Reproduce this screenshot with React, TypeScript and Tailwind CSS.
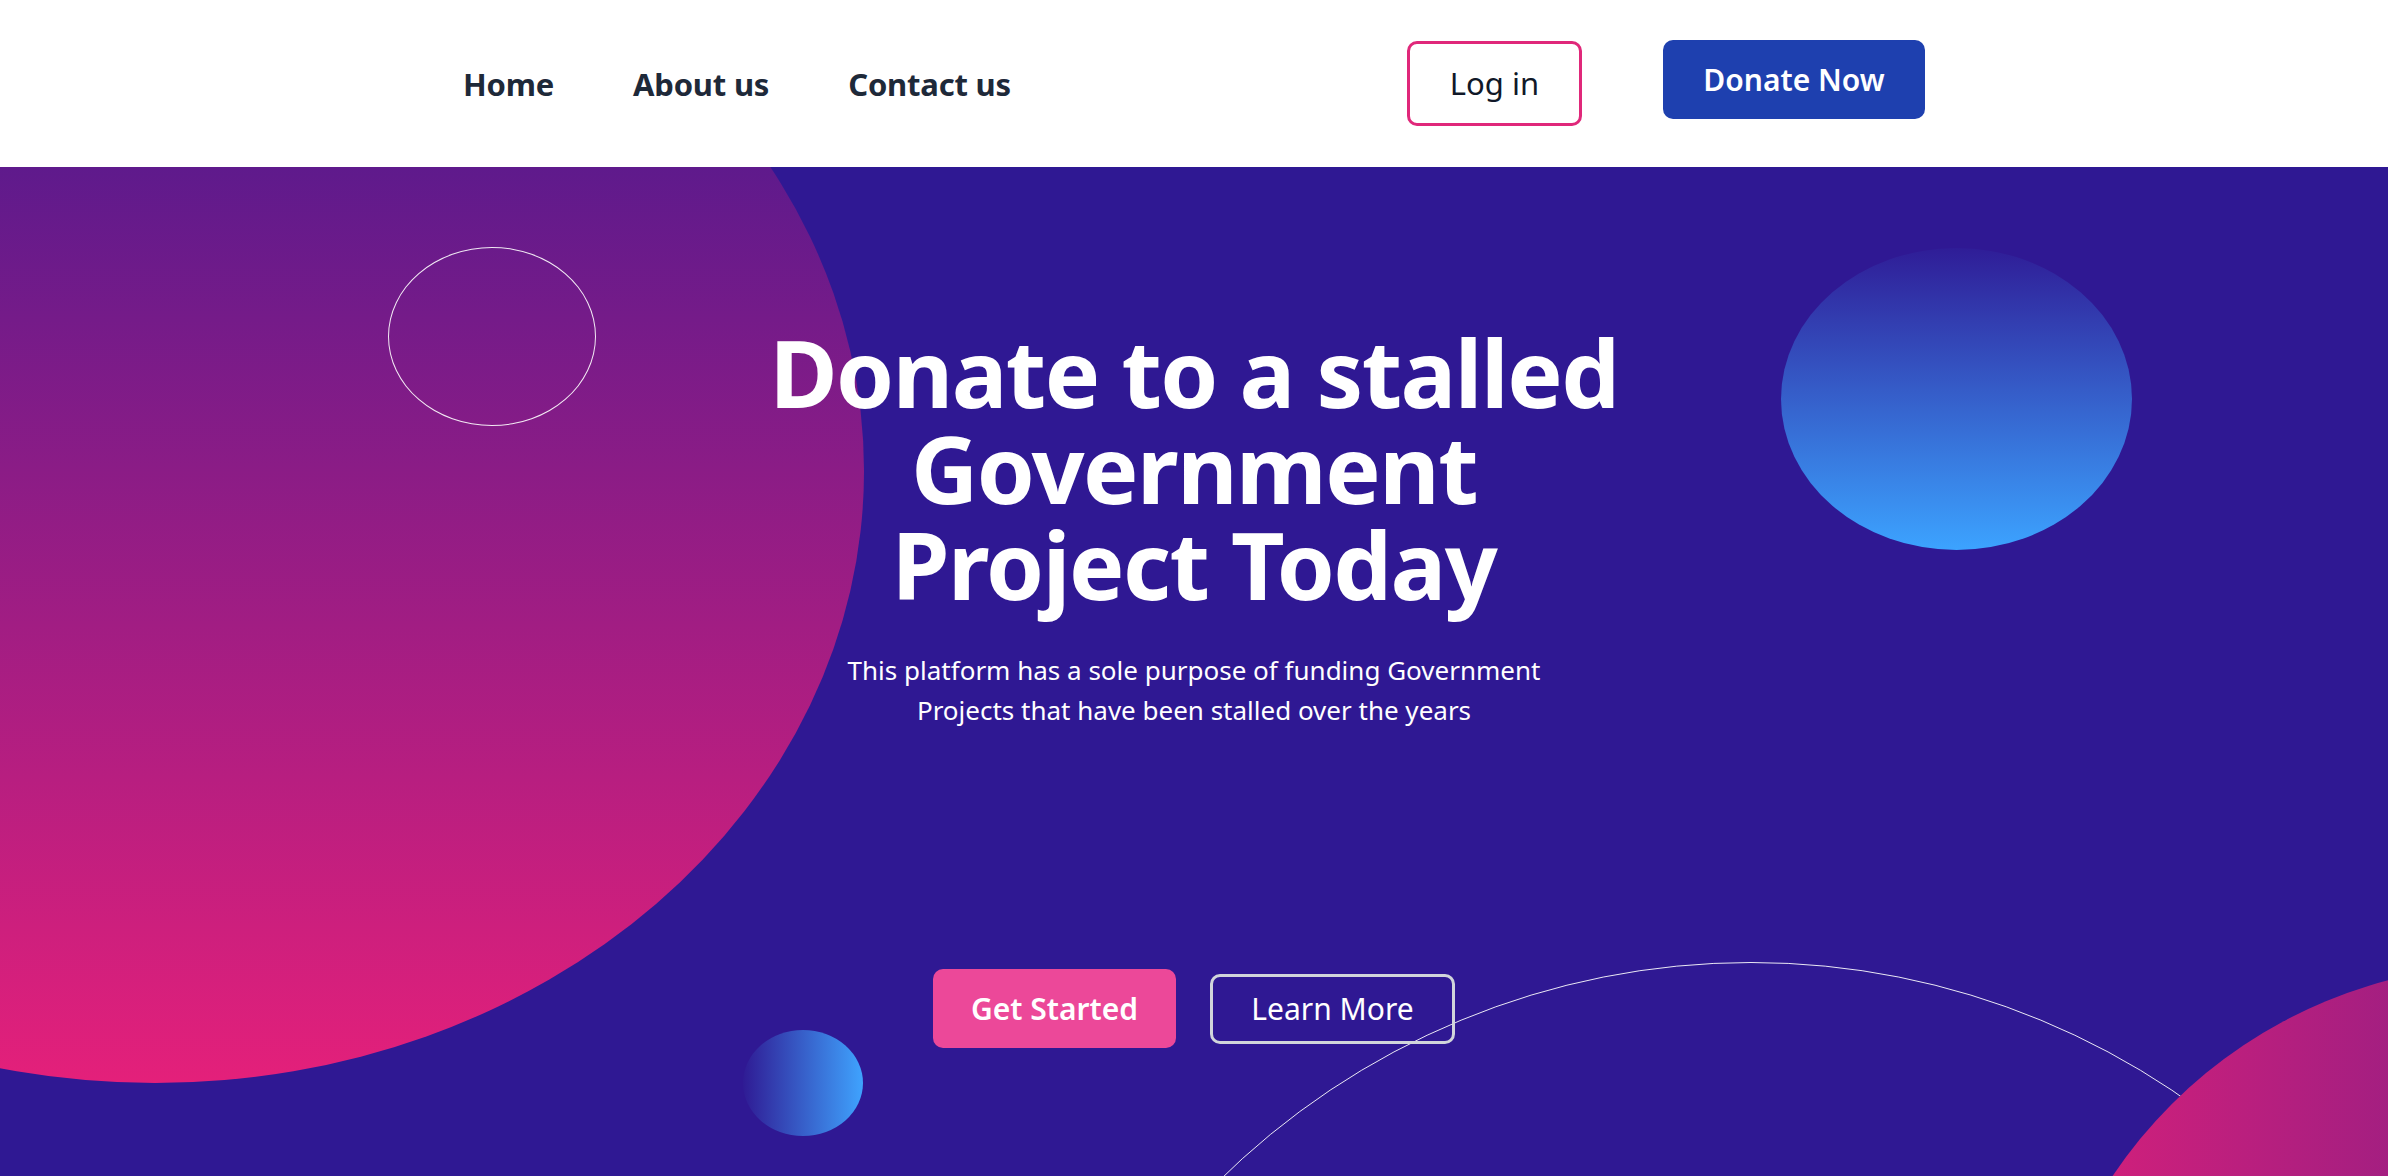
import React from "react";

export default function App() {
  return (
    <div className="w-[2388px] h-[1176px] overflow-hidden bg-white font-['Noto_Sans',sans-serif]">
      {/* Navbar */}
      <header className="h-[167px] bg-white">
        <div className="mx-auto w-[1462px] h-full flex justify-between items-start">
          <nav className="flex items-center gap-[79px] h-[167px] pt-[2px]">
            <a className="text-[31px] font-bold text-gray-800 tracking-[-0.2px]">Home</a>
            <a className="text-[31px] font-bold text-gray-800 tracking-[-0.2px]">About us</a>
            <a className="text-[31px] font-bold text-gray-800 tracking-[-0.2px]">Contact us</a>
          </nav>
          <div className="flex items-start gap-[81px] pt-[40px]">
            <button className="mt-[1px] w-[175px] h-[85px] border-[3px] border-[#e0287a] rounded-[10px] text-[31px] text-gray-900 bg-white flex items-center justify-center">
              Log in
            </button>
            <button className="w-[262px] h-[79px] bg-[#1e40af] rounded-[10px] text-[30px] font-semibold text-white flex items-center justify-center">
              Donate Now
            </button>
          </div>
        </div>
      </header>

      {/* Hero */}
      <section className="relative h-[1009px] overflow-hidden bg-[#2f1893]">
        {/* decorative shapes */}
        <div className="absolute left-[-554px] top-[-308px] w-[1418px] h-[1224px] rounded-[50%] bg-[linear-gradient(to_bottom,#321892,#e4207a)]" />
        <div className="absolute left-[388px] top-[80px] w-[208px] h-[179px] rounded-[50%] border border-white/90" />
        <div className="absolute left-[1781px] top-[81px] w-[351px] h-[302px] rounded-[50%] bg-[linear-gradient(to_bottom,#2f1d97,#3ca3ff)]" />
        <div className="absolute left-[743px] top-[863px] w-[120px] h-[106px] rounded-[50%] bg-[linear-gradient(to_right,#2f1b94,#3fa3fe)]" />
        <div className="absolute left-[993px] top-[795px] w-[1516px] h-[1516px] rounded-full border border-white/90" />
        <div className="absolute left-[2032px] top-[798px] w-[952px] h-[952px] rounded-full bg-[linear-gradient(to_right,#da207a,#4a1c8c)]" />

        {/* content */}
        <div className="relative z-10 flex flex-col items-center pt-[157px]">
          <h1 className="text-[93px] leading-[96px] font-bold text-white text-center tracking-[-1.5px]">
            Donate to a stalled
            <br />
            Government
            <br />
            Project Today
          </h1>
          <p className="mt-[38px] w-[760px] text-[26px] leading-[40px] text-white text-center">
            This platform has a sole purpose of funding Government Projects that have been stalled over the years
          </p>
          <div className="mt-[239px] flex items-center gap-[34px]">
            <button className="w-[243px] h-[79px] bg-[#ec4899] rounded-[10px] text-[30px] font-semibold text-white flex items-center justify-center">
              Get Started
            </button>
            <button className="w-[245px] h-[70px] border-[3px] border-[#d1d5db] rounded-[10px] text-[30px] text-white flex items-center justify-center">
              Learn More
            </button>
          </div>
        </div>
      </section>
    </div>
  );
}
